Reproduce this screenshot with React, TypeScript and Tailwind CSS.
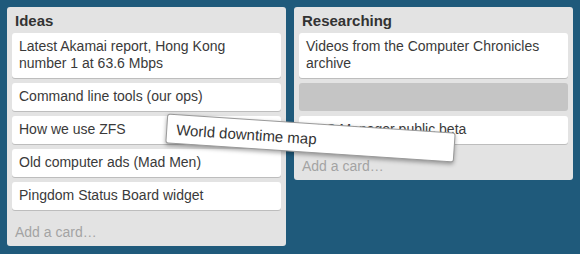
import React from "react";

type List = {
  title: string;
  cards: (string | null)[];
};

const lists: List[] = [
  {
    title: "Ideas",
    cards: [
      "Latest Akamai report, Hong Kong number 1 at 63.6 Mbps",
      "Command line tools (our ops)",
      "How we use ZFS",
      "Old computer ads (Mad Men)",
      "Pingdom Status Board widget",
    ],
  },
  {
    title: "Researching",
    cards: ["Videos from the Computer Chronicles archive", null, "DNS Manager public beta"],
  },
];

function Card({ text }: { text: string | null }) {
  if (text === null) {
    return <div className="h-[28px] rounded-[3px] bg-[#c5c5c5]" />;
  }
  return (
    <div className="rounded-[3px] bg-white px-[7px] pt-[5px] pb-[6px] text-[14px] leading-[17px] text-[#3a3a3a] shadow-[0_1px_0_#bdbdbd]">
      {text}
    </div>
  );
}

export default function App() {
  return (
    <div
      className="relative flex h-[254px] w-[580px] items-start gap-[8px] overflow-hidden bg-[#1f5a7b] p-[7px]"
      style={{ fontFamily: '"Liberation Sans", Arial, sans-serif' }}
    >
      {lists.map((list) => (
        <div key={list.title} className="w-[279px] rounded-[3px] bg-[#e3e3e3] px-[5px]">
          <div className="px-[3px] pt-[7px] pb-[5px] text-[15px] font-bold leading-[14px] text-[#333]">
            {list.title}
          </div>
          <div className="flex flex-col gap-[5px]">
            {list.cards.map((c, i) => (
              <Card key={i} text={c} />
            ))}
          </div>
          <div className="px-[3px] pt-[13px] pb-[5px] text-[14px] leading-[18px] text-[#a3a3a3]">
            Add a card…
          </div>
        </div>
      ))}

      <div className="absolute left-[166px] top-[123px] h-[30px] w-[289px] rotate-[3.8deg] rounded-[3px] border border-[#9a9a9a] bg-white px-[9px] pt-[6px] text-[15px] leading-[17px] text-[#333] shadow-[0_2px_4px_rgba(0,0,0,0.35)]">
        World downtime map
      </div>
    </div>
  );
}
